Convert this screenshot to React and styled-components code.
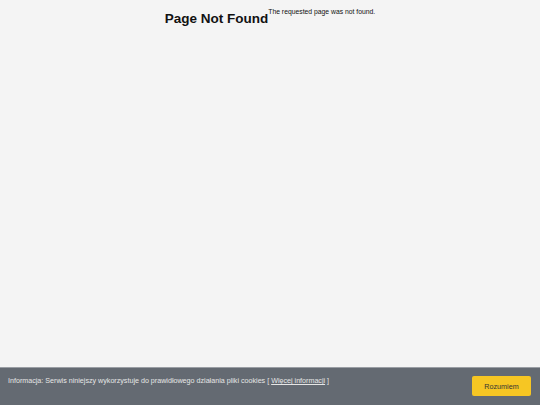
import React from "react";
import styled, { createGlobalStyle } from "styled-components";

const Global = createGlobalStyle`
  html, body { margin: 0; padding: 0; }
  body { background: #f4f4f4; font-family: "Liberation Sans", Arial, sans-serif; }
`;

const Page = styled.div`
  height: 405px;
  display: flex;
  flex-direction: column;
  overflow: hidden;
`;

const Main = styled.main`
  flex: 1;
  display: flex;
  justify-content: center;
  align-items: flex-start;
`;

const Title = styled.h1`
  margin: 11px 0 0;
  font-size: 13.5px;
  line-height: 16px;
  font-weight: 700;
  color: #111;
`;

const Message = styled.p`
  margin: 8px 0 0;
  font-size: 6.8px;
  line-height: 8px;
  color: #111;
`;

const CookieBar = styled.div`
  height: 37px;
  border-top: 1px solid #9a9ea4;
  background: #646a72;
  display: flex;
  align-items: flex-start;
  justify-content: space-between;
  padding: 0 9px 0 8px;
`;

const CookieText = styled.p`
  margin: 9px 0 0;
  font-size: 7.15px;
  line-height: 9px;
  color: #e6e6e6;
  a { color: #e6e6e6; text-decoration: underline; }
`;

const AcceptButton = styled.button`
  margin-top: 8px;
  width: 59px;
  height: 20px;
  border: none;
  border-radius: 2px;
  background: #f6c623;
  color: #333;
  font-family: "Liberation Sans", Arial, sans-serif;
  font-size: 7.2px;
  padding: 0;
  cursor: pointer;
`;

export default function App() {
  return (
    <Page>
      <Global />
      <Main>
        <Title>Page Not Found</Title>
        <Message>The requested page was not found.</Message>
      </Main>
      <CookieBar>
        <CookieText>
          Informacja: Serwis niniejszy wykorzystuje do prawidłowego działania pliki cookies [ <a href="#">Więcej informacji</a> ]
        </CookieText>
        <AcceptButton>Rozumiem</AcceptButton>
      </CookieBar>
    </Page>
  );
}
